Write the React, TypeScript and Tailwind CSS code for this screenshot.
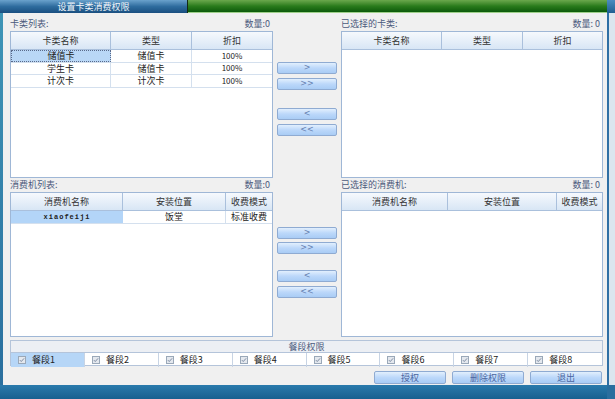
import React from "react";

type Col = { label: string; w: string };

const cardCols: Col[] = [
  { label: "卡类名称", w: "w-[100px]" },
  { label: "类型", w: "w-[81px]" },
  { label: "折扣", w: "flex-1" },
];

const cardRows = [
  ["储值卡", "储值卡", "100%"],
  ["学生卡", "储值卡", "100%"],
  ["计次卡", "计次卡", "100%"],
];

const posColsLeft: Col[] = [
  { label: "消费机名称", w: "w-[112px]" },
  { label: "安装位置", w: "w-[103px]" },
  { label: "收费模式", w: "flex-1" },
];

const posColsRight: Col[] = [
  { label: "消费机名称", w: "w-[106px]" },
  { label: "安装位置", w: "w-[109px]" },
  { label: "收费模式", w: "flex-1" },
];

function Grid({
  cols,
  rows = [],
  height,
  kind,
}: {
  cols: Col[];
  rows?: string[][];
  height: string;
  kind?: "card" | "pos";
}) {
  return (
    <div className={`flex flex-col border border-[#9fb7d6] bg-white ${height}`}>
      <div className="flex h-[18px] shrink-0 border-b border-[#aac0dc] bg-gradient-to-b from-[#f6f9fd] to-[#d8e6f5]">
        {cols.map((c, i) => (
          <div
            key={i}
            className={`${c.w} flex items-center justify-center text-[9px] text-[#333] ${
              i < cols.length - 1 ? "border-r border-[#aac0dc]" : ""
            }`}
          >
            {c.label}
          </div>
        ))}
      </div>
      {rows.map((r, ri) => (
        <div key={ri} className="flex h-[12.5px] shrink-0 border-b border-[#d4e0ee]">
          {r.map((cell, ci) => {
            const sel = ri === 0 && ci === 0;
            let cls = "";
            if (sel && kind === "card") cls = "bg-[#b9d7f6] border border-dotted border-[#5a6a8a]";
            if (sel && kind === "pos") cls = "bg-[#b3d5f8]";
            return (
              <div
                key={ci}
                className={`${cols[ci].w} flex items-center justify-center text-[#222] ${
                  ci < cols.length - 1 && !sel ? "border-r border-[#d4e0ee]" : ""
                } ${cls} ${
                  kind === "pos" && ci === 0
                    ? "font-['Liberation_Mono',monospace] text-[7px] font-bold tracking-[1px]"
                    : cell.includes("%")
                    ? "text-[8px]"
                    : "text-[9px]"
                }`}
              >
                {cell}
              </div>
            );
          })}
        </div>
      ))}
    </div>
  );
}

function Btn({ label, cls = "" }: { label: string; cls?: string }) {
  return (
    <div
      className={`flex h-[12px] w-[60px] items-center justify-center rounded-[2px] border border-[#8fabd2] bg-gradient-to-b from-[#e2effd] via-[#bcd8fa] to-[#a9ccf5] font-['DejaVu_Sans',sans-serif] text-[8px] leading-none text-[#6580b0] ${cls}`}
    >
      {label}
    </div>
  );
}

function Panel({
  label,
  count,
  children,
}: {
  label: string;
  count: string;
  children: React.ReactNode;
}) {
  return (
    <div className="flex flex-col">
      <div className="flex h-[14px] items-center justify-between pr-[3px] text-[9px] text-[#4b5a7c]">
        <span>{label}</span>
        <span>{count}</span>
      </div>
      {children}
    </div>
  );
}

function Check() {
  return (
    <span className="flex h-[8px] w-[8px] items-center justify-center border border-[#9aa8b8] bg-[#e4e8ee]">
      <svg viewBox="0 0 8 8" className="h-[6px] w-[6px]">
        <path d="M1.2 4.2 L3 6 L6.8 1.8" fill="none" stroke="#6a7a92" strokeWidth="1.1" />
      </svg>
    </span>
  );
}

export default function App() {
  const meals = ["餐段1", "餐段2", "餐段3", "餐段4", "餐段5", "餐段6", "餐段7", "餐段8"];
  return (
    <div className="flex h-[399px] w-[615px] flex-col overflow-hidden bg-[#f0f0f0] font-['Noto_Sans_CJK_SC',sans-serif]">
      {/* title bar */}
      <div className="flex h-[13px] shrink-0">
        <div className="flex w-[187px] items-center justify-center bg-gradient-to-b from-[#6aa2cc] via-[#2e6c9e] to-[#1a4f80] text-[9px] leading-none text-[#f2f6fa]">
          设置卡类消费权限
        </div>
        <div className="w-[1px] bg-[#142a14]" />
        <div className="flex-1 border-b border-[#9ed08a] bg-gradient-to-b from-[#6aa84c] via-[#2a7c1c] to-[#0b5a0b]" />
        <div className="w-[8px] bg-gradient-to-b from-[#4a8cc0] to-[#1f5f92]" />
      </div>

      <div className="flex min-h-0 flex-1">
        <div className="w-[3px] bg-gradient-to-b from-[#3f95b6] to-[#2a6f9e]" />
        <div className="flex flex-1 flex-col pl-[7px] pr-[4px] pt-[4px]">
          {/* section 1 */}
          <div className="flex">
            <div className="w-[263px]">
              <Panel label="卡类列表:" count="数量:0">
                <Grid cols={cardCols} rows={cardRows} height="h-[147px]" kind="card" />
              </Panel>
            </div>
            <div className="flex w-[68px] flex-col pl-[4px] pt-[45px]">
              <Btn label=">" />
              <Btn label=">>" cls="mt-[4px]" />
              <Btn label="<" cls="mt-[18px]" />
              <Btn label="<<" cls="mt-[4px]" />
            </div>
            <div className="w-[262px]">
              <Panel label="已选择的卡类:" count="数量: 0">
                <Grid cols={cardCols} height="h-[147px]" />
              </Panel>
            </div>
          </div>

          {/* section 2 */}
          <div className="flex">
            <div className="w-[263px]">
              <Panel label="消费机列表:" count="数量:0">
                <Grid
                  cols={posColsLeft}
                  rows={[["xiaofeiji", "饭堂", "标准收费"]]}
                  height="h-[145px]"
                  kind="pos"
                />
              </Panel>
            </div>
            <div className="flex w-[68px] flex-col pl-[4px] pt-[49px]">
              <Btn label=">" />
              <Btn label=">>" cls="mt-[3px]" />
              <Btn label="<" cls="mt-[16px]" />
              <Btn label="<<" cls="mt-[4px]" />
            </div>
            <div className="w-[262px]">
              <Panel label="已选择的消费机:" count="数量: 0">
                <Grid cols={posColsRight} height="h-[145px]" />
              </Panel>
            </div>
          </div>

          {/* meal group */}
          <div className="mt-[3px] flex flex-col border border-[#b4c4da] bg-white">
            <div className="flex h-[12px] items-center justify-center border-b border-[#b4c4da] bg-[#eceff4] text-[9px] text-[#4b5a7c]">
              餐段权限
            </div>
            <div className="grid h-[12px] grid-cols-8">
              {meals.map((m, i) => (
                <div
                  key={m}
                  className={`flex items-center gap-[6px] pl-[7px] text-[9px] text-[#222] ${
                    i < 7 ? "border-r border-[#c8d4e4]" : ""
                  } ${i === 0 ? "bg-[#b6d6f7]" : ""}`}
                >
                  <Check />
                  <span>{m}</span>
                </div>
              ))}
            </div>
          </div>

          {/* action buttons */}
          <div className="mt-[5px] flex justify-end gap-[6px] pr-[1px]">
            {["授权", "删除权限", "退出"].map((b) => (
              <div
                key={b}
                className="flex h-[13px] w-[72px] items-center justify-center rounded-[2px] border border-[#8fabd2] bg-gradient-to-b from-[#e2effd] via-[#bcd8fa] to-[#a9ccf5] text-[9px] leading-none text-[#4a65a0]"
              >
                {b}
              </div>
            ))}
          </div>
        </div>
        <div className="flex w-[8px]">
          <div className="w-[2px] bg-[#2f6fa4]" />
          <div className="flex-1 bg-[#dbe6ef]" />
        </div>
      </div>

      {/* bottom bar */}
      <div className="flex h-[14px] shrink-0 bg-gradient-to-b from-[#2a7aac] to-[#17608f]">
        <div className="flex-1" />
        <div className="w-[8px] bg-[#2a6e9e]" />
      </div>
    </div>
  );
}
